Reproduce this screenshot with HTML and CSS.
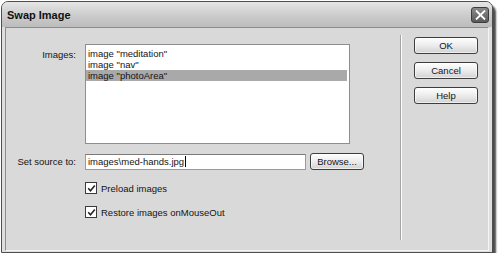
FILE: index.html
```html
<!DOCTYPE html>
<html>
<head>
<meta charset="utf-8">
<link rel="stylesheet" href="styles.css">
</head>
<body>
<div class="window">
  <div class="titlebar">
    <span class="title">Swap Image</span>
    <span class="close"><svg width="11" height="10" viewBox="0 0 11 10"><path d="M1 0.5 L10 9.5 M10 0.5 L1 9.5" stroke="#fff" stroke-width="1.8" fill="none"/></svg></span>
  </div>
  <div class="client">
    <div class="form">
      <div class="row">
        <label class="lbl lbl-top">Images:</label>
        <div class="listbox">
          <div class="item">image "meditation"</div>
          <div class="item">image "nav"</div>
          <div class="item selected">image "photoArea"</div>
        </div>
      </div>
      <div class="row source">
        <label class="lbl">Set source to:</label>
        <div class="srcctl">
          <div class="input">images\med-hands.jpg<span class="caret"></span></div>
          <div class="btn browse">Browse...</div>
        </div>
      </div>
      <div class="row check">
        <span></span>
        <div class="cb"><span class="box"><svg width="9" height="9" viewBox="0 0 9 9"><path d="M1.2 4.2 L3.5 6.8 L7.8 1.5" stroke="#222" stroke-width="1.5" fill="none"/></svg></span>Preload images</div>
      </div>
      <div class="row check">
        <span></span>
        <div class="cb"><span class="box"><svg width="9" height="9" viewBox="0 0 9 9"><path d="M1.2 4.2 L3.5 6.8 L7.8 1.5" stroke="#222" stroke-width="1.5" fill="none"/></svg></span>Restore images onMouseOut</div>
      </div>
    </div>
    <div class="sep"></div>
    <div class="buttons">
      <div class="btn">OK</div>
      <div class="btn">Cancel</div>
      <div class="btn">Help</div>
    </div>
  </div>
</div>
</body>
</html>
```

FILE: styles.css
```css
html, body {
  margin: 0;
  padding: 0;
  background: #fff;
}
body {
  font-family: "Liberation Sans", Arial, sans-serif;
  font-size: 9.5px;
  color: #141414;
}
.window {
  width: 490px;
  height: 250px;
  margin: 1px 0 0 1px;
  border: 1px solid #4e4e4e;
  border-radius: 7px 7px 0 0;
  background: #dedede;
  box-shadow: 3px 4px 2px rgba(0, 0, 0, 0.7);
  display: flex;
  flex-direction: column;
}
.titlebar {
  height: 25px;
  flex: none;
  border-radius: 6px 6px 0 0;
  background: linear-gradient(#e6e6e6 0%, #d4d4d4 35%, #c6c6c6 70%, #bcbcbc 100%);
  display: flex;
  align-items: center;
  justify-content: space-between;
  padding: 0 3px 0 5px;
}
.title {
  font-weight: bold;
  font-size: 11px;
  color: #111;
  padding-top: 1px;
}
.close {
  width: 16px;
  height: 14px;
  border: 1px solid #3c3c3c;
  border-radius: 3px;
  background: linear-gradient(#8a8a8a, #5a5a5a);
  display: flex;
  align-items: center;
  justify-content: center;
}
.client {
  flex: 1;
  margin: 0 3px 1px 3px;
  border: 1px solid;
  border-color: #8c8c8c #f4f4f4 #f4f4f4 #8c8c8c;
  background: #d9d9d9;
  display: flex;
}
.form {
  width: 391px;
  padding-top: 16px;
}
.row {
  display: grid;
  grid-template-columns: 70px auto;
  column-gap: 9px;
  align-items: center;
}
.lbl {
  text-align: right;
}
.lbl-top {
  align-self: start;
  padding-top: 5px;
}
.listbox {
  width: 263px;
  height: 95px;
  border: 1px solid #8e8e8e;
  background: #fff;
  padding-top: 3px;
  box-sizing: content-box;
}
.item {
  height: 11px;
  line-height: 11px;
  padding-left: 2px;
  margin-right: 2px;
}
.item.selected {
  background: #a9a9a9;
}
.source {
  margin-top: 9px;
}
.srcctl {
  display: flex;
  align-items: center;
  gap: 4px;
}
.input {
  width: 217px;
  height: 14px;
  line-height: 14px;
  border: 1px solid #9a9a9a;
  border-top-color: #7a7a7a;
  background: #fff;
  padding-left: 2px;
  display: flex;
  align-items: center;
}
.caret {
  width: 1px;
  height: 11px;
  background: #000;
  margin-left: 1px;
}
.btn {
  height: 15px;
  line-height: 15px;
  border: 1px solid #3e3e3e;
  border-radius: 3px;
  background: linear-gradient(#ffffff, #ececec 50%, #d2d2d2);
  text-align: center;
  box-shadow: inset 0 0 0 1px rgba(255, 255, 255, 0.6);
}
.browse {
  width: 52px;
}
.check {
  margin-top: 12px;
}
.check + .check {
  margin-top: 12px;
}
.cb {
  display: flex;
  align-items: center;
  gap: 4px;
  height: 12px;
}
.box {
  width: 10px;
  height: 10px;
  border: 1px solid #3a3a3a;
  background: #fff;
  display: flex;
  align-items: center;
  justify-content: center;
}
.sep {
  width: 1px;
  border-right: 1px solid #fbfbfb;
  background: #a4a4a4;
  margin: 7px 0 10px 3px;
}
.buttons {
  margin-left: 12px;
  padding-top: 9px;
  display: flex;
  flex-direction: column;
  gap: 8px;
  width: 64px;
}
.buttons .btn {
  height: 15px;
}
```
